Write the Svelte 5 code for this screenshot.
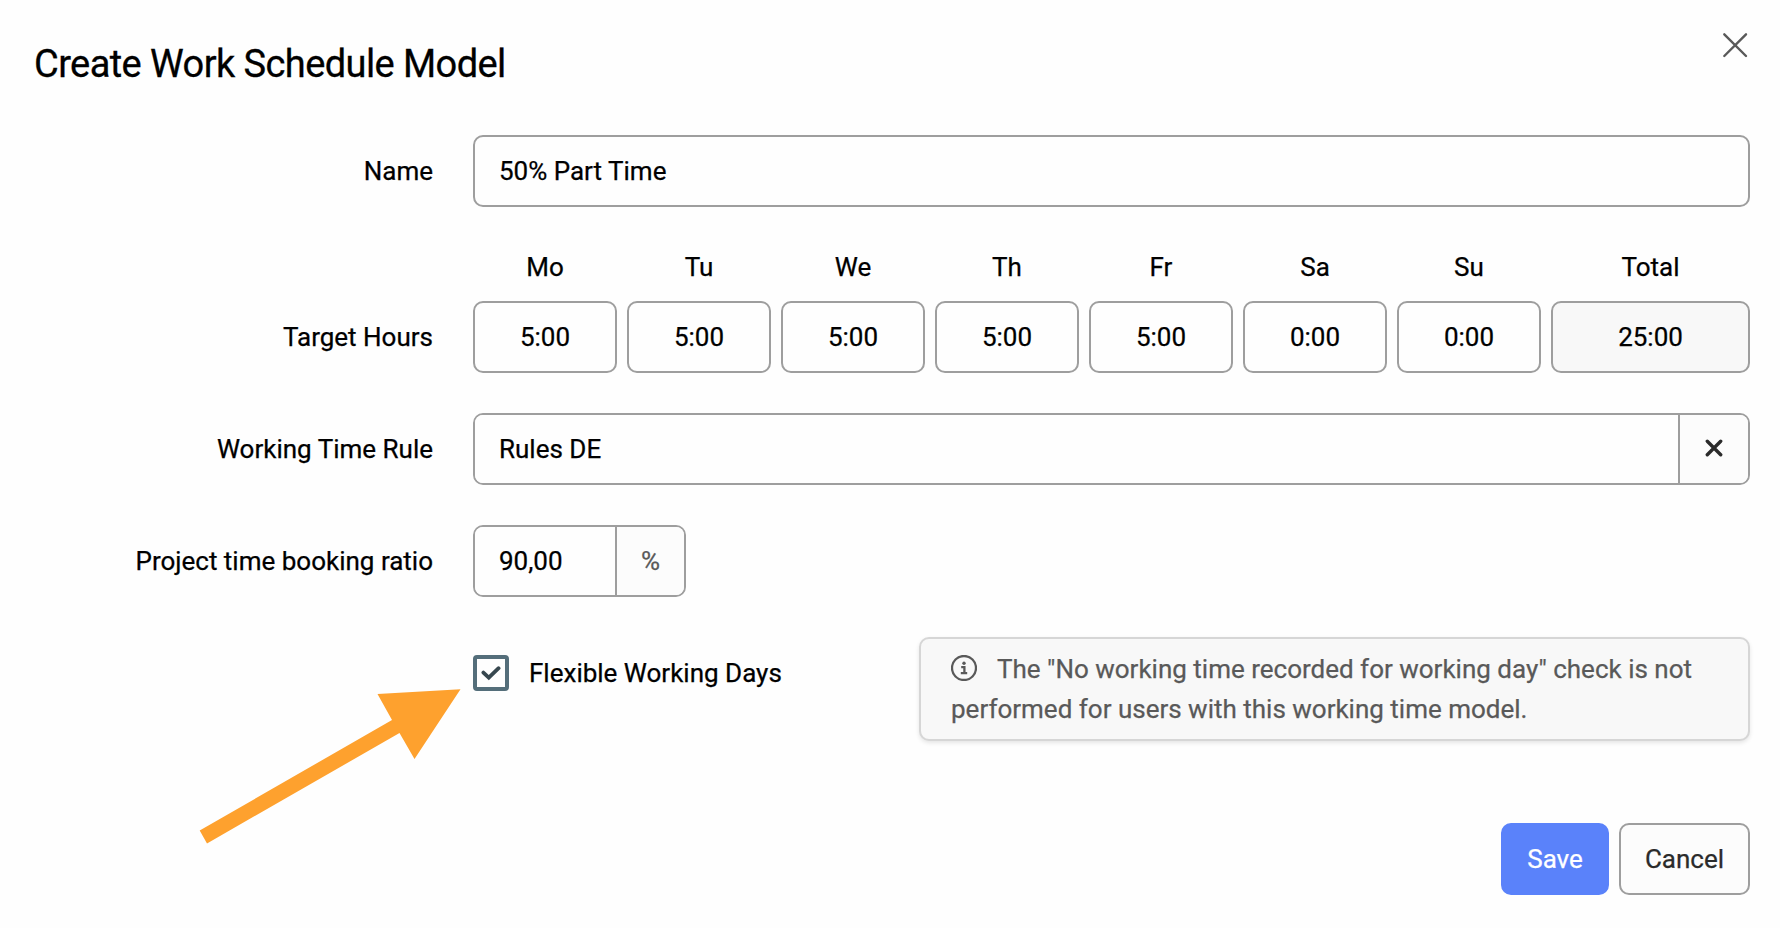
<script lang="ts">
    // Form state
    let name = $state('50% Part Time');
    let rule = $state('Rules DE');
    let ratio = $state('90,00');
    let flexible = $state(true);
    let days = $state([
        { label: 'Mo', hours: '5:00' },
        { label: 'Tu', hours: '5:00' },
        { label: 'We', hours: '5:00' },
        { label: 'Th', hours: '5:00' },
        { label: 'Fr', hours: '5:00' },
        { label: 'Sa', hours: '0:00' },
        { label: 'Su', hours: '0:00' }
    ]);

    function toMinutes(value: string) {
        const [h, m] = value.split(':').map(Number);
        return (h || 0) * 60 + (m || 0);
    }

    let total = $derived.by(() => {
        const minutes = days.reduce((sum, day) => sum + toMinutes(day.hours), 0);
        return `${Math.floor(minutes / 60)}:${String(minutes % 60).padStart(2, '0')}`;
    });
</script>

<div class="dialog" role="dialog" aria-labelledby="dialog-title">
    <header>
        <h1 id="dialog-title">Create Work Schedule Model</h1>
        <button class="close" type="button" aria-label="Close">
            <svg width="26" height="26" viewBox="0 0 26 26">
                <path d="M2.3 2.3L24 24M24 2.3L2.3 24" />
            </svg>
        </button>
    </header>

    <form>
        <div class="row">
            <label for="name">Name</label>
            <input id="name" class="field" bind:value={name} />
        </div>

        <div class="row hours-row">
            <span class="label">Target Hours</span>
            <div class="hours">
                {#each days as day}
                    <label class="day">
                        <span>{day.label}</span>
                        <input class="field" bind:value={day.hours} />
                    </label>
                {/each}
                <label class="day total">
                    <span>Total</span>
                    <input class="field" value={total} readonly />
                </label>
            </div>
        </div>

        <div class="row">
            <label for="rule">Working Time Rule</label>
            <div class="group">
                <input id="rule" bind:value={rule} />
                <button class="addon clear" type="button" aria-label="Clear" onclick={() => (rule = '')}>
                    <svg width="18" height="18" viewBox="0 0 18 18">
                        <path d="M2.3 2.3L15.7 15.7M15.7 2.3L2.3 15.7" />
                    </svg>
                </button>
            </div>
        </div>

        <div class="row">
            <label for="ratio">Project time booking ratio</label>
            <div class="group ratio">
                <input id="ratio" bind:value={ratio} />
                <span class="addon">%</span>
            </div>
        </div>

        <div class="row flexible-row">
            <label class="check">
                <input type="checkbox" bind:checked={flexible} />
                <span class="box">
                    {#if flexible}
                        <svg width="20" height="16" viewBox="0 0 20 16">
                            <path d="M2.4 7.6L7.8 12.7L17.6 3.2" />
                        </svg>
                    {/if}
                </span>
                Flexible Working Days
            </label>
            <p class="info">
                <svg width="26" height="26" viewBox="0 0 26 26">
                    <circle cx="13" cy="13" r="12" />
                    <circle class="dot" cx="13" cy="8.3" r="1.7" />
                    <path d="M10.2 12.2H13.4V18M9.8 18.2H16.2" />
                </svg>The "No working time recorded for working day" check is not performed for users with this working time model.
            </p>
        </div>
    </form>

    <footer>
        <button class="btn primary" type="button">Save</button>
        <button class="btn" type="button">Cancel</button>
    </footer>

    <!-- Arrow pointing at the checkbox -->
    <svg class="arrow" width="262" height="156" viewBox="0 0 262 156">
        <polygon points="260.5,1.2 177.5,6 192,32 -0.3,142.5 7,155.5 199.5,45 214.5,71" />
    </svg>
</div>

<style>
    :global(body) {
        background: #fefefe;
    }

    .dialog {
        position: relative;
        box-sizing: border-box;
        width: 1780px;
        height: 928px;
        padding: 32px 30px 33px 34px;
        font-family: Roboto, sans-serif;
        font-size: 26px;
        line-height: 40px;
        color: #000;
        -webkit-text-stroke: 0.25px currentColor;
        display: flex;
        flex-direction: column;
    }

    input,
    button {
        box-sizing: border-box;
        margin: 0;
        font: inherit;
        letter-spacing: inherit;
        color: inherit;
    }

    svg {
        fill: none;
        stroke: currentColor;
        stroke-linecap: round;
    }

    header {
        display: flex;
        justify-content: space-between;
        align-items: flex-start;
        height: 103px;
    }

    h1 {
        margin: 8px 0 0;
        font-size: 38px;
        line-height: 48px;
        font-weight: 400;
        letter-spacing: -0.58px;
        -webkit-text-stroke: 0.3px currentColor;
    }

    .close {
        display: flex;
        margin-right: 2px;
        padding: 0;
        border: 0;
        background: none;
        color: #595959;
        stroke-width: 2.4;
    }

    form {
        display: flex;
        flex-direction: column;
        gap: 40px;
    }

    .row {
        display: grid;
        grid-template-columns: 399px 1277px;
        column-gap: 40px;
        align-items: center;
    }

    .row > label:not(.check),
    .label {
        text-align: right;
    }

    .field {
        width: 100%;
        height: 72px;
        padding: 0 24px;
        border: 2px solid #9e9e9e;
        border-radius: 10px;
        background: #fefefe;
    }

    .hours-row {
        align-items: end;
    }

    .hours-row .label {
        line-height: 72px;
    }

    .hours {
        display: flex;
        gap: 10px;
    }

    .day {
        width: 144px;
        display: flex;
        flex-direction: column;
        gap: 14px;
        text-align: center;
    }

    .day .field {
        padding: 0;
        text-align: center;
    }

    .day.total {
        flex: 1;
    }

    .total .field {
        background: #f8f8f8;
    }

    .group {
        box-sizing: border-box;
        display: flex;
        height: 72px;
        border: 2px solid #9e9e9e;
        border-radius: 10px;
        overflow: hidden;
    }

    .group input {
        flex: 1;
        min-width: 0;
        padding: 0 24px;
        border: 0;
        background: #fefefe;
    }

    .ratio {
        width: 213px;
    }

    .addon {
        box-sizing: border-box;
        width: 69px;
        display: flex;
        align-items: center;
        justify-content: center;
        border: 0;
        border-left: 2px solid #9e9e9e;
        background: #fcfcfc;
        color: #595959;
    }

    .clear {
        width: 70px;
        padding: 0;
        color: #2b2b2b;
        stroke-width: 3.4;
    }

    .clear svg {
        position: relative;
        top: -1px;
    }

    .flexible-row {
        grid-template-columns: 406px 831px;
        padding-left: 439px;
        align-items: start;
    }

    .check {
        display: flex;
        align-items: center;
        gap: 20px;
        height: 72px;
    }

    .check input {
        position: absolute;
        opacity: 0;
    }

    .box {
        box-sizing: border-box;
        width: 36px;
        height: 36px;
        display: flex;
        align-items: center;
        justify-content: center;
        border: 4px solid #546e7a;
        border-radius: 4px;
        color: #37474f;
        stroke-width: 3.8;
    }

    .info {
        box-sizing: border-box;
        height: 104px;
        margin: 0;
        padding: 10px 30px;
        border: 2px solid #d6d6d6;
        border-radius: 10px;
        background: #f8f8f8;
        box-shadow: 0 2px 4px rgba(0, 0, 0, 0.1);
        color: #595959;
    }

    .info svg {
        margin-right: 20px;
        vertical-align: -3px;
        stroke-width: 2.3;
        stroke-linecap: butt;
    }

    .info .dot {
        fill: currentColor;
        stroke: none;
    }

    footer {
        display: flex;
        justify-content: flex-end;
        gap: 10px;
        margin-top: auto;
    }

    .btn {
        width: 131px;
        height: 72px;
        padding: 0;
        border: 2px solid #9e9e9e;
        border-radius: 10px;
        background: #fcfcfc;
        color: #2b2b2b;
    }

    .btn.primary {
        width: 108px;
        border-color: #5a82fa;
        background: #5a82fa;
        color: #fff;
    }

    .arrow {
        position: absolute;
        left: 200px;
        top: 688px;
        overflow: visible;
        fill: #fea12e;
        stroke: none;
        pointer-events: none;
    }
</style>
